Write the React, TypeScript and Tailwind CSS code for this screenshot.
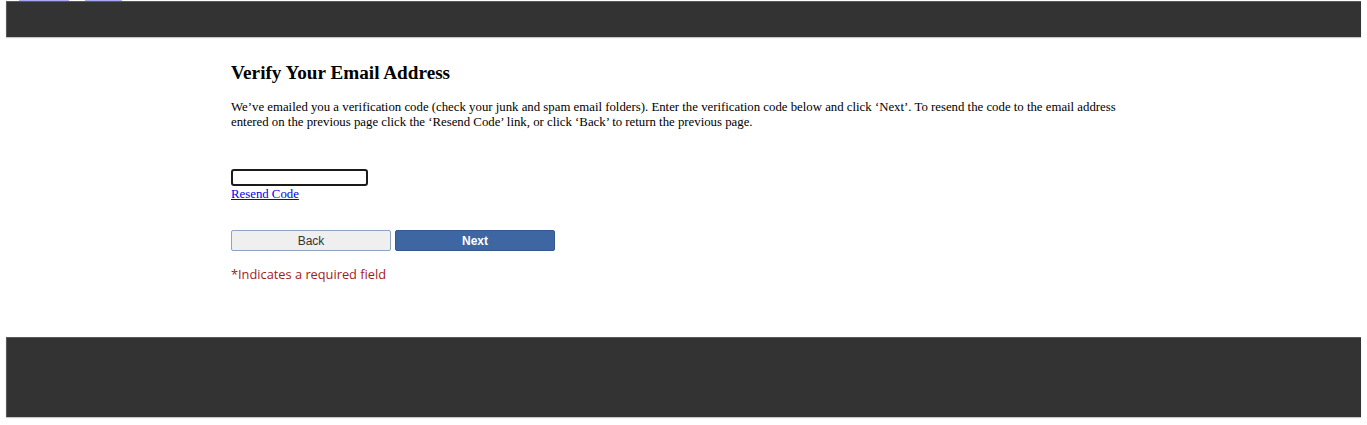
import React from "react";

export default function App() {
  return (
    <div className="relative min-h-[425px] bg-white px-[6px] pt-px">
      {/* skip links peeking above the header */}
      <a href="#main" className="absolute left-[19px] top-0 h-px w-[50px] bg-[#a9a9f5]" />
      <a href="#nav" className="absolute left-[85px] top-0 h-px w-[37px] bg-[#a9a9f5]" />

      <header className="h-[36px] border-l border-t border-[#5a5a5a] bg-[#333333] shadow-[0_1px_1px_#c8c8c8]" />

      <main
        id="main"
        className="mx-auto w-[905px] pb-[54px] pt-[24px] text-black"
        style={{ fontFamily: '"Liberation Serif", "Times New Roman", serif' }}
      >
        <h2 className="text-[19.2px] font-bold leading-[24px]">Verify Your Email Address</h2>

        <p className="mt-[15px] text-[12.8px] leading-[15px]">
          We’ve emailed you a verification code (check your junk and spam email folders). Enter the
          verification code below and click ‘Next’. To resend the code to the email address entered
          on the previous page click the ‘Resend Code’ link, or click ‘Back’ to return the previous
          page.
        </p>

        <div className="mt-[39px] flex flex-col items-start">
          <input
            type="text"
            aria-label="Verification code"
            className="h-[17px] w-[137px] rounded-[3px] border-2 border-[#1a1a1a] bg-white px-1 text-[13px] outline-none"
          />
          <a href="#resend" className="mt-px text-[12.8px] leading-[15px] text-[#0000ee] underline">
            Resend Code
          </a>
        </div>

        <div className="mt-[28px] flex gap-[4px]" style={{ fontFamily: '"Liberation Sans", Arial, sans-serif' }}>
          <button className="h-[21px] w-[160px] rounded-[2px] border border-[#8ea3bf] bg-[#efefef] text-[12px] text-[#333]">
            Back
          </button>
          <button className="h-[21px] w-[160px] rounded-[2px] border border-[#35598f] bg-[#3e66a3] text-[12px] font-bold text-white">
            Next
          </button>
        </div>

        <p
          className="mt-[14px] text-[12.8px] leading-[18px] text-[#a3191c]"
          style={{ fontFamily: '"Open Sans", "Noto Sans", sans-serif' }}
        >
          *Indicates a required field
        </p>
      </main>

      <footer className="h-[80px] border-l border-t border-[#5a5a5a] bg-[#333333] shadow-[0_1px_1px_#c8c8c8]" />
    </div>
  );
}
